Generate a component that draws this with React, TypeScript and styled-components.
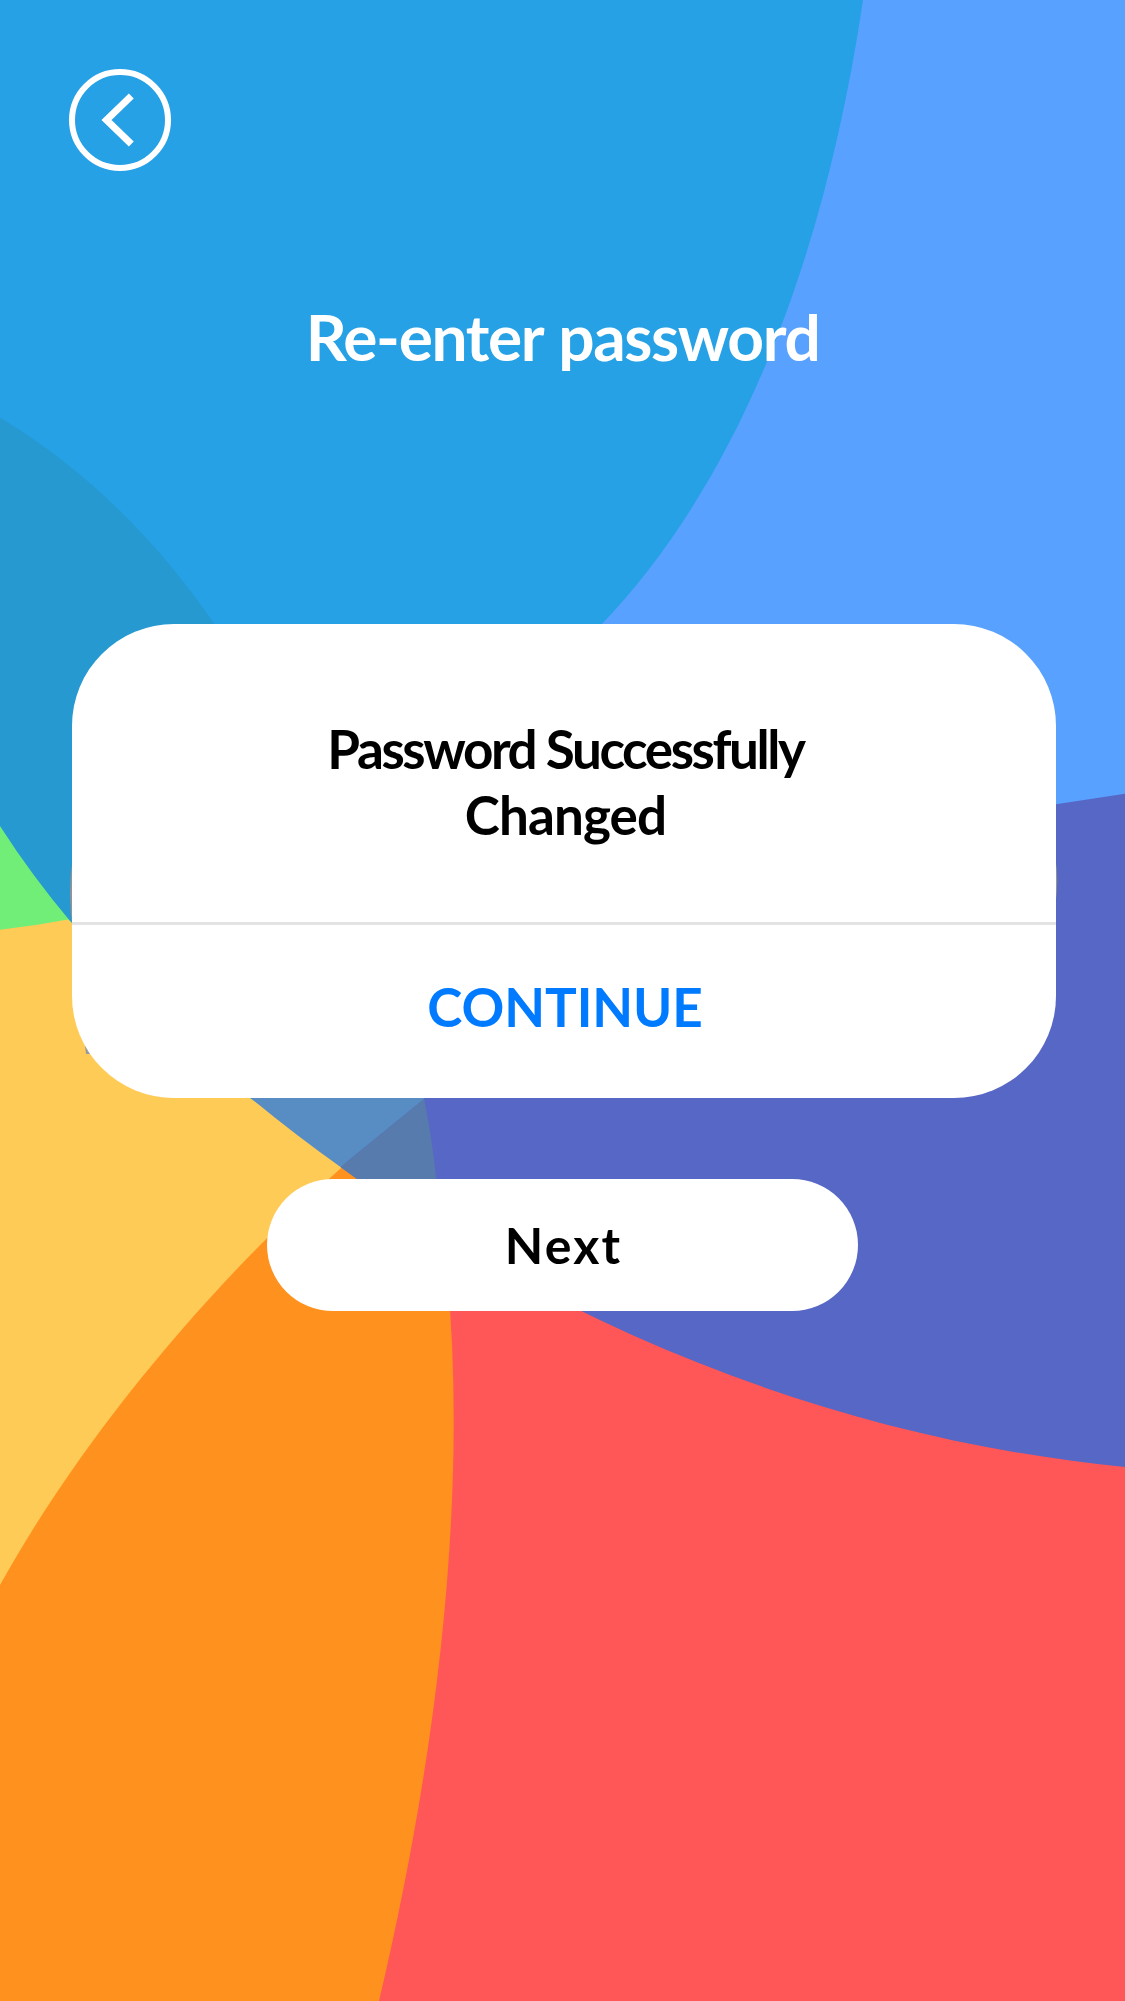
import React from "react";
import styled, { createGlobalStyle } from "styled-components";

const Global = createGlobalStyle`
  body { margin: 0; background: #27a1e5; }
`;

const Screen = styled.main`
  position: relative;
  isolation: isolate;
  width: 1125px;
  height: 2001px;
  overflow: hidden;
  display: flex;
  flex-direction: column;
  align-items: center;
  font-family: Lato, "Open Sans", sans-serif;
`;

const Backdrop = styled.svg`
  position: absolute;
  inset: 0;
  z-index: -1;
`;

const TopBar = styled.header`
  align-self: stretch;
  display: flex;
  padding: 69px 69px 0;
`;

const BackButton = styled.button`
  width: 102px;
  height: 102px;
  padding: 0;
  border: 0;
  background: none;
`;

const BackIcon = styled.svg`
  display: block;
`;

const Title = styled.h1`
  margin: 126px 0 0;
  height: 80px;
  line-height: 80px;
  font-size: 64px;
  font-weight: 700;
  letter-spacing: -1.35px;
  word-spacing: 2px;
  white-space: nowrap;
  color: #fff;
`;

const Card = styled.section`
  width: 984px;
  height: 474px;
  margin: 247px 0 0 3px;
  border-radius: 102px;
  background: #fff;
  display: flex;
  flex-direction: column;
`;

const Message = styled.p`
  margin: 0;
  padding: 92px 0 0 3px;
  height: 206px;
  display: flex;
  flex-direction: column;
  align-items: center;
  line-height: 66px;
  font-size: 53px;
  font-weight: 700;
  color: #000;
`;

const MessageLine = styled.span<{ $tracking: number }>`
  display: block;
  white-space: nowrap;
  letter-spacing: ${(p) => p.$tracking}px;
`;

const ContinueButton = styled.button`
  flex: 1;
  padding: 0 0 11px 2px;
  border: 0;
  border-top: 3px solid #e3e3e3;
  background: none;
  display: flex;
  align-items: center;
  justify-content: center;
  font: 700 53px Lato, "Open Sans", sans-serif;
  letter-spacing: -0.1px;
  color: #007aff;
`;

const NextButton = styled.button`
  width: 591px;
  height: 132px;
  margin-top: 81px;
  padding: 0 0 0 2px;
  border: 0;
  border-radius: 66px;
  background: #fff;
  display: flex;
  align-items: center;
  justify-content: center;
  font: 700 50px Lato, "Open Sans", sans-serif;
  letter-spacing: 2.2px;
  color: #000;
`;

export default function App() {
  return (
    <Screen>
      <Global />
      <Backdrop width="1125" height="2001" viewBox="0 0 1125 2001" aria-hidden="true">
        <rect width="1125" height="2001" fill="#27a1e5" />
        <path d="M863 0C820 290 725 495 602 624V900H1125V0Z" fill="#58a1ff" />
        <path d="M0 417.6C88 471 158 542 214 623.5V1000H0Z" fill="#2599d0" />
        <path d="M0 826Q32 876 71.7 923V960H0Z" fill="#71ee78" />
        <path d="M370 1200H1125V2001H370Z" fill="#ff5757" />
        <path d="M0 929.7Q34 926 68 919.5L72 923C121 983 185 1047 250 1098L400 1200L200 1500L0 1700Z" fill="#ffcb57" />
        <path d="M0 1585C104 1398 272 1216 424 1099C443 1205 453.7 1310 453.7 1420C453.7 1600 427 1797 379 2001H0Z" fill="#ff921e" />
        <path d="M424 1090L1056 804.3L1125 793.7V1467C830 1438 560 1325 340.5 1167Z" fill="#5767c5" />
        <path d="M250 1097.5V1060H424V1099L340.5 1167Q294 1134 250 1097.5Z" fill="#588dc4" />
        <path d="M340.5 1167L424 1099Q436 1156 441 1235Q387 1202 340.5 1167Z" fill="#587bae" />
        {/* edges of the input fields showing from under the dialog */}
        <path d="M73 856Q67 893 73 932Z" fill="#8f949c" />
        <path d="M1055 856Q1059.5 881 1055 906Z" fill="#8f949c" />
        <path d="M85 1046L86 1054H92L90 1046Z" fill="#9a9a9a" />
      </Backdrop>
      <TopBar>
        <BackButton aria-label="Back">
          <BackIcon width="102" height="102" viewBox="0 0 102 102" fill="none" stroke="#fff">
            <circle cx="51" cy="51" r="48" strokeWidth="6" />
            <path d="M62.3 27L37.5 51L62.3 75" strokeWidth="7" />
          </BackIcon>
        </BackButton>
      </TopBar>
      <Title>Re-enter password</Title>
      <Card>
        <Message>
          <MessageLine $tracking={-2.4}>Password Successfully</MessageLine>
          <MessageLine $tracking={-0.9}>Changed</MessageLine>
        </Message>
        <ContinueButton>CONTINUE</ContinueButton>
      </Card>
      <NextButton>Next</NextButton>
    </Screen>
  );
}
